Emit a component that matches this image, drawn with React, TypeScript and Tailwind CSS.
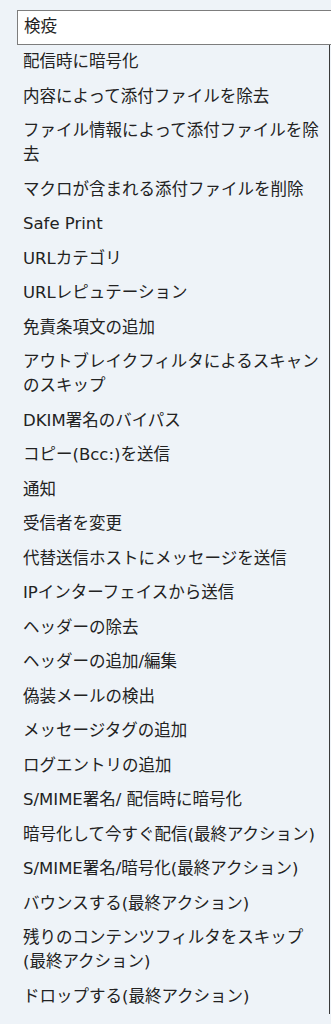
const items = [
  "配信時に暗号化",
  "内容によって添付ファイルを除去",
  "ファイル情報によって添付ファイルを除去",
  "マクロが含まれる添付ファイルを削除",
  "Safe Print",
  "URLカテゴリ",
  "URLレピュテーション",
  "免責条項文の追加",
  "アウトブレイクフィルタによるスキャンのスキップ",
  "DKIM署名のバイパス",
  "コピー(Bcc:)を送信",
  "通知",
  "受信者を変更",
  "代替送信ホストにメッセージを送信",
  "IPインターフェイスから送信",
  "ヘッダーの除去",
  "ヘッダーの追加/編集",
  "偽装メールの検出",
  "メッセージタグの追加",
  "ログエントリの追加",
  "S/MIME署名/ 配信時に暗号化",
  "暗号化して今すぐ配信(最終アクション)",
  "S/MIME署名/暗号化(最終アクション)",
  "バウンスする(最終アクション)",
  "残りのコンテンツフィルタをスキップ(最終アクション)",
  "ドロップする(最終アクション)",
];

export default function App() {
  return (
    <div className="min-h-screen bg-[#eef3f8] pl-[17px] pt-[10px] text-[16.5px] text-[#222] font-['DejaVu_Sans','Noto_Sans_CJK_JP',sans-serif]">
      <div className="flex h-[35px] w-[330px] items-center border border-[#7d7d7d] bg-white px-[6px]">
        検疫
      </div>
      <ul className="w-[313px] border-r border-[#3a3a3a]">
        {items.map((item) => (
          <li key={item} className="px-[6px] py-[5.25px] leading-[24px]">
            {item}
          </li>
        ))}
      </ul>
    </div>
  );
}
